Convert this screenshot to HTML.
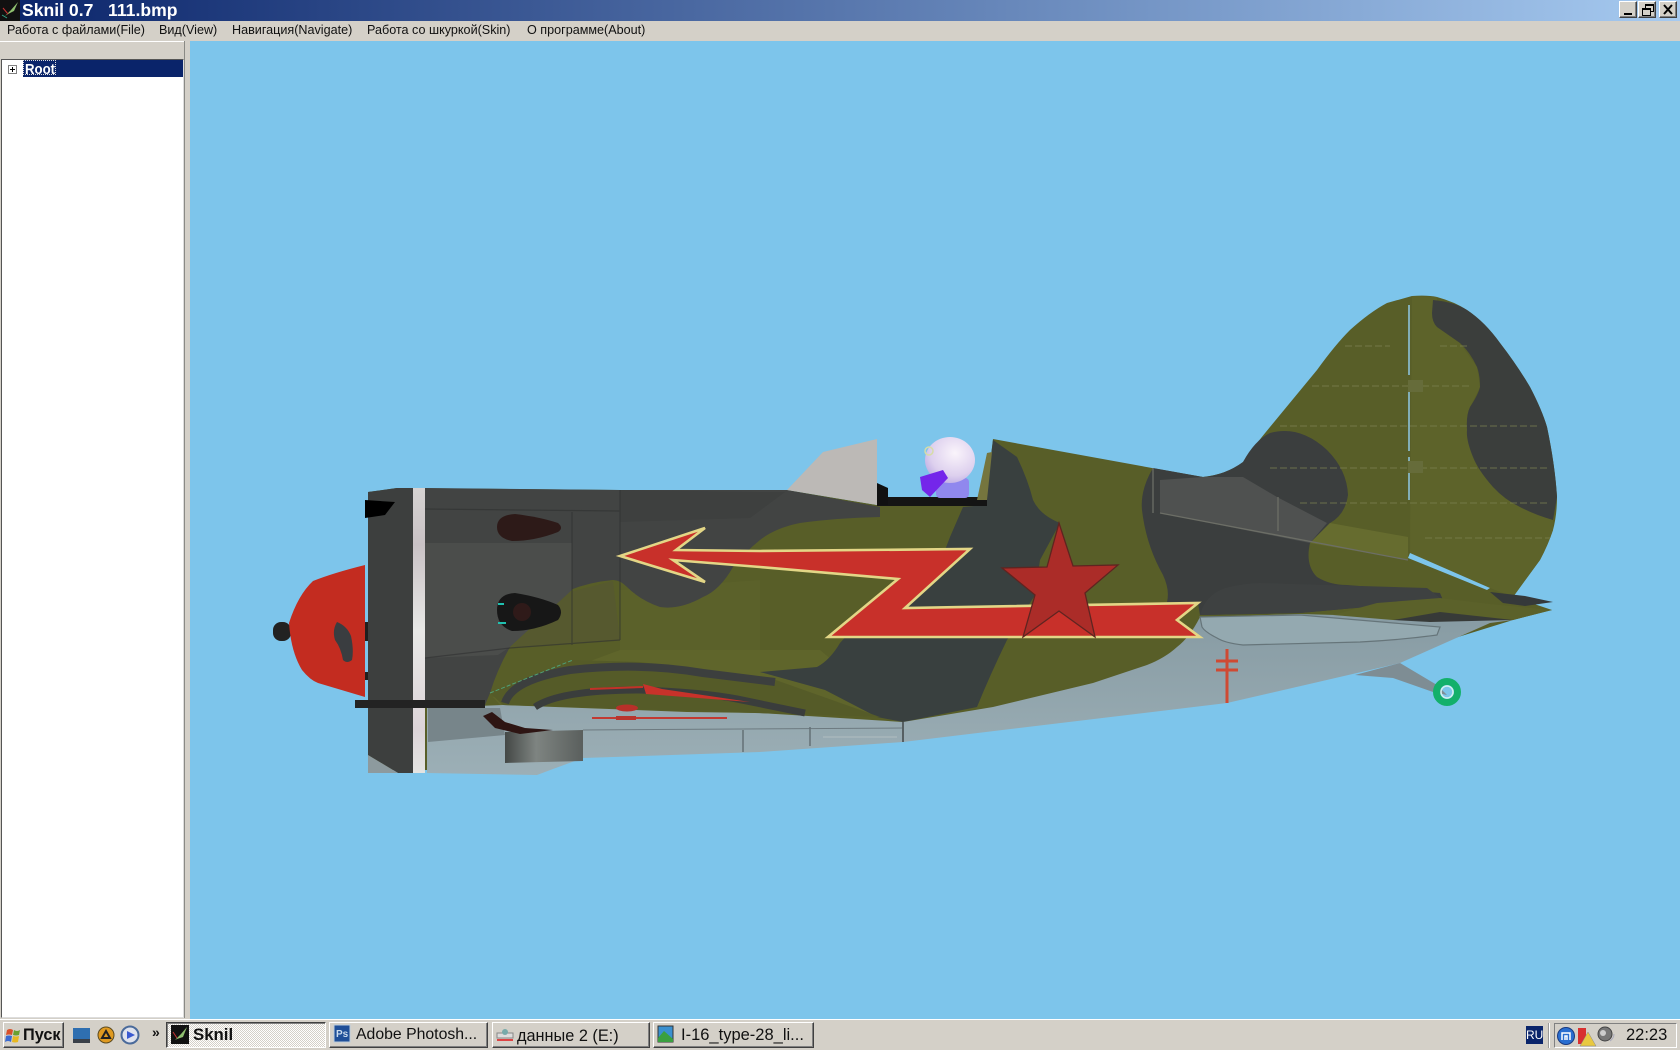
<!DOCTYPE html>
<html>
<head>
<meta charset="utf-8">
<style>
html,body{margin:0;padding:0;width:1680px;height:1050px;overflow:hidden;background:#d4d0c8;font-family:"Liberation Sans",sans-serif;}
#t{position:absolute;left:0;top:0;width:1680px;height:21px;background:linear-gradient(90deg,#0a246a,#a6caf0);}
.a{position:absolute;white-space:pre;line-height:1;}
#m{position:absolute;left:0;top:21px;width:1680px;height:20px;background:#d4d0c8;}
.mi{position:absolute;top:2px;font-size:12.6px;color:#111;white-space:pre;}
#v{position:absolute;left:190px;top:41px;width:1490px;height:978px;background:#7dc5eb;}
#ptop{position:absolute;left:0;top:41px;width:184px;height:1px;background:#fff;}
#pr{position:absolute;left:184px;top:41px;width:1px;height:977px;background:#8a8a85;}
#pane{position:absolute;left:1px;top:59px;width:181px;height:957px;background:#fff;border:1px solid #555;border-right-color:#ddd;border-bottom-color:#ddd;}
#sel{position:absolute;left:21px;top:0;width:160px;height:17px;background:#0a246a;}
#plane{position:absolute;left:0;top:0;}
#tb{position:absolute;left:0;top:1019px;width:1680px;height:31px;background:#d4d0c8;border-top:1px solid #fff;box-sizing:border-box;}
.b{position:absolute;box-sizing:border-box;background:#d4d0c8;border:1px solid;border-color:#fff #404040 #404040 #fff;box-shadow:inset -1px -1px 0 #808080;}
</style>
</head>
<body>
<div id="t">
<svg style="position:absolute;left:0;top:0" width="22" height="21"><rect width="20" height="21" fill="#111"/><path d="M5 16L11 10L18 2L14 11L8 14Z" fill="#8fc06f"/><path d="M3 8L8 14" stroke="#c33" stroke-width="1"/><path d="M2 15L7 18" stroke="#3a8" stroke-width="1"/></svg>
<div class="a" style="left:22px;top:2px;font-size:17.6px;font-weight:bold;color:#fff;">Sknil 0.7   111.bmp</div>
<div class="b" style="left:1619px;top:1px;width:18px;height:17px;"><div style="position:absolute;left:4px;top:11px;width:8px;height:2px;background:#000"></div></div>
<div class="b" style="left:1638px;top:1px;width:18px;height:17px;"><div style="position:absolute;left:6px;top:2px;width:7px;height:5px;border:1px solid #000;border-top-width:2px"></div><div style="position:absolute;left:3px;top:6px;width:7px;height:5px;border:1px solid #000;border-top-width:2px;background:#d4d0c8"></div></div>
<div class="b" style="left:1659px;top:1px;width:18px;height:17px;"><svg width="16" height="15" style="position:absolute;left:0;top:0"><path d="M4 3L12 12M12 3L4 12" stroke="#000" stroke-width="2"/></svg></div>
</div>
<div id="m">
<span class="mi" style="left:7px">Работа с файлами(File)</span>
<span class="mi" style="left:159px">Вид(View)</span>
<span class="mi" style="left:232px">Навигация(Navigate)</span>
<span class="mi" style="left:367px">Работа со шкуркой(Skin)</span>
<span class="mi" style="left:527px">О программе(About)</span>
</div>
<div id="ptop"></div><div id="pr"></div>
<div id="pane">
<div id="sel"></div>
<div style="position:absolute;left:6px;top:5px;width:7px;height:7px;border:1px solid #808080;background:#fff"></div>
<div style="position:absolute;left:8px;top:9px;width:5px;height:1px;background:#000"></div>
<div style="position:absolute;left:10px;top:7px;width:1px;height:5px;background:#000"></div>
<div class="a" style="left:21px;top:0;width:33px;height:15px;outline:1px dotted #ddd;outline-offset:-1px;"></div>
<div class="a" style="left:23px;top:2px;font-size:15px;font-weight:bold;color:#fff;transform:scaleX(.88);transform-origin:0 0;">Root</div>
</div>
<div id="v"></div>
<svg id="plane" width="1680" height="1050" viewBox="0 0 1680 1050">
<defs>
<linearGradient id="belly" x1="0" y1="0" x2="0" y2="1"><stop offset="0" stop-color="#879ba3"/><stop offset="1" stop-color="#9cafb6"/></linearGradient>
<linearGradient id="stripe" x1="0" y1="0" x2="0" y2="1"><stop offset="0" stop-color="#d6d3d2"/><stop offset=".2" stop-color="#c9c2c5"/><stop offset=".5" stop-color="#e8e8e6"/><stop offset=".85" stop-color="#dcd4d8"/><stop offset="1" stop-color="#e4e4e2"/></linearGradient>
<linearGradient id="wheel" x1="0" y1="0" x2="1" y2="0"><stop offset="0" stop-color="#444846"/><stop offset=".4" stop-color="#7e8481"/><stop offset="1" stop-color="#5a5f5d"/></linearGradient>
<radialGradient id="head" cx=".6" cy=".35" r=".7"><stop offset="0" stop-color="#faf4fb"/><stop offset=".7" stop-color="#ddd0ee"/><stop offset="1" stop-color="#bfaee4"/></radialGradient>
</defs>
<!-- propeller -->
<rect x="273" y="622" width="18" height="19" rx="8" fill="#222"/>
<rect x="364" y="622" width="6" height="19" fill="#1f1f1f"/><rect x="364" y="672" width="6" height="8" fill="#1f1f1f"/>
<path d="M365,565Q333,573 313,581Q298,595 289,623Q291,652 302,670Q310,680 318,683L365,697Z" fill="#c32c20"/>
<path d="M337,622Q347,626 351,636Q354,650 352,660Q347,664 343,660Q341,648 335,640Q332,630 337,622Z" fill="#3a3d40"/>
<!-- main silhouette olive -->
<path d="M368,492L397,488L620,490L760,492L787,490L877,505L985,505L993,439L1152,468L1203,477Q1228,474 1243,462Q1255,445 1270,427L1317,370Q1335,345 1350,330Q1370,312 1387,303L1412,296Q1428,295 1437,297Q1455,302 1467,310Q1485,322 1500,343Q1517,365 1530,387Q1542,410 1547,427Q1555,465 1557,497Q1557,515 1553,530Q1548,545 1540,560L1513,597L1552,610L1513,620L1400,655L1200,690L903,735L760,745L583,750L537,770L368,770Z" fill="#585e28"/>
<polygon points="620,590 760,580 760,650 620,660" fill="#5b612a"/>
<polygon points="493,697 620,650 820,650 880,700 877,717 500,705" fill="#5f652b"/>
<!-- fin lighter -->
<path d="M1412,296L1437,297L1437,327L1460,343L1477,367L1480,387L1470,407L1467,430L1473,457L1493,487L1520,507L1553,520L1553,530Q1548,545 1540,560L1513,597L1490,588L1410,553Z" fill="#5d632a"/>
<!-- front cowl -->
<path d="M425,488L620,490L787,490L880,507L880,517Q835,518 800,523Q775,528 760,540Q745,552 733,567Q720,590 703,597Q680,610 660,607Q640,600 627,587Q620,580 613,580Q590,582 570,590Q535,615 510,647Q497,670 490,693L485,705L425,705Z" fill="#424443"/>
<polygon points="425,543 572,543 572,590 510,647 498,655 425,658" fill="#4b4d4b"/>
<polygon points="570,592 613,581 620,640 510,648" fill="#56592f"/>
<polygon points="620,490 760,492 785,492 750,518 620,522" fill="#3e403f"/>
<path d="M425,509L620,511M425,658L510,648L620,640M572,512V645M620,490V640" stroke="#2f3130" stroke-width="1.2" fill="none" opacity=".6"/>
<polygon points="368,492 397,488 425,488 425,773 398,773 368,755" fill="#3d3f3e"/>
<polygon points="368,755 398,773 368,773" fill="#8d9a9e"/>
<!-- centre dark -->
<path d="M993,440L1017,457Q1028,480 1033,500Q1040,515 1060,523L1040,560L1035,595L1007,640Q990,675 977,707L903,722L877,717L825,690L760,672L817,667Q830,660 840,643L898,579L945,550L950,537L963,507L985,505Z" fill="#39403f"/>
<!-- rear dark -->
<path d="M1153,468L1203,477Q1225,475 1243,462Q1255,440 1270,433Q1300,425 1327,450Q1347,470 1348,495Q1345,515 1330,523L1310,543Q1305,565 1317,577Q1330,585 1347,585L1440,593L1443,600L1300,613L1200,615L1198,603L1167,602Q1170,590 1163,575Q1146,545 1142,510Q1140,490 1153,468Z" fill="#3b3e3e"/>
<polygon points="1160,480 1203,477 1243,477 1277,497 1327,523 1310,543 1160,513" fill="#4f5150"/>
<polygon points="1330,523 1408,537 1408,560 1310,543" fill="#666c2f"/>
<path d="M1153,468V513M1160,513L1408,560M1278,497V531" stroke="#6c6e66" stroke-width="1.3" fill="none"/>
<!-- rudder dark -->
<path d="M1433,300Q1455,302 1467,310Q1485,322 1500,343Q1517,365 1530,387Q1542,410 1547,427Q1555,465 1557,497L1553,520Q1535,515 1520,507Q1505,500 1493,487Q1478,470 1473,457Q1466,440 1467,430Q1466,415 1470,407Q1478,395 1480,387Q1480,375 1477,367Q1470,352 1460,343L1437,327Q1432,322 1432,313Z" fill="#3b3e3c"/>
<!-- fin ribs -->
<path d="M1345,346H1390M1440,346H1470M1312,386H1470M1280,426H1540M1270,468H1550M1300,503H1550M1425,538H1550" stroke="#7b8152" stroke-width="1.6" stroke-dasharray="7 3" opacity=".5" fill="none"/>
<path d="M1409,305V500" stroke="#8fc8e6" stroke-width="1.5" stroke-dasharray="70 6"/>
<rect x="1408" y="380" width="15" height="12" fill="#666c3a"/><rect x="1408" y="461" width="15" height="12" fill="#666c3a"/>
<polygon points="1410,553 1490,588 1487,590 1408,558" fill="#7dc5eb"/>
<!-- tail wheel -->
<polygon points="1355,675 1400,663 1437,685 1447,695 1433,692 1393,678" fill="#7e8d94"/>
<circle cx="1447" cy="692" r="10.5" fill="none" stroke="#13b06b" stroke-width="7"/>
<circle cx="1447" cy="692" r="6" fill="none" stroke="#d0f0f0" stroke-width="1.5"/>
<!-- belly -->
<path d="M1200,617Q1190,637 1177,647Q1165,658 1147,665L1093,683L993,707L903,722L760,713L687,712L503,705L427,708V773L537,775L553,769L583,758L760,752L903,742L1227,703L1357,673L1400,663L1490,623L1513,620L1300,614Z" fill="url(#belly)"/>
<polygon points="428,708 500,708 505,735 428,742" fill="#77858a"/>
<!-- fairing -->
<path d="M1200,617L1300,615L1440,627L1437,635Q1400,640 1360,642L1243,645Q1225,643 1217,638Q1205,632 1202,627Z" fill="#94a9b0" stroke="#66757a" stroke-width="1.2"/>
<path d="M1200,615Q1205,595 1225,588Q1245,583 1260,583L1427,588L1443,600L1300,613Z" fill="#3e4141"/>
<!-- tailplane -->
<polygon points="1333,615 1377,603 1440,598 1490,604 1552,610 1513,620 1393,620" fill="#5b612a"/>
<path d="M1393,620L1440,612L1513,620L1430,622Z" fill="#373a38"/>
<polygon points="1490,592 1525,596 1553,602 1525,606 1503,603" fill="#35393a"/>
<!-- wheel-well lines -->
<path d="M490,693L573,660L640,662L770,678L880,717L503,705Z" fill="#555b28"/>
<path d="M505,703Q512,680 570,670Q640,662 703,673L775,682" stroke="#3c3f3e" stroke-width="8" fill="none"/>
<path d="M535,707Q560,690 640,690Q700,692 737,699L805,713" stroke="#3a3d3c" stroke-width="7" fill="none"/>
<path d="M490,693L573,660" stroke="#4fa078" stroke-width="1" stroke-dasharray="4 2" fill="none"/>
<path d="M590,689L643,687" stroke="#c23228" stroke-width="2"/>
<polygon points="643,684 662,689 750,702 646,694" fill="#c8322a"/>
<ellipse cx="627" cy="708" rx="11" ry="3.5" fill="#b83029"/>
<path d="M592,718H727" stroke="#c23a32" stroke-width="2"/>
<rect x="616" y="716" width="20" height="4" fill="#b8352e"/>
<path d="M583,730L903,728" stroke="#6d7a80" stroke-width="1" fill="none"/>
<path d="M743,730V752M810,727V746" stroke="#647176" stroke-width="1.5" fill="none"/>
<path d="M823,737H897" stroke="#a8b8bc" stroke-width="1.5"/>
<path d="M903,722V742" stroke="#565f62" stroke-width="2"/>
<!-- wheel -->
<polygon points="505,732 583,730 583,761 505,763" fill="url(#wheel)"/>
<path d="M483,716L492,712L505,722L525,728L553,730L520,734L495,728Z" fill="#2e1513"/>
<!-- stripe white -->
<rect x="413" y="488" width="12" height="285" fill="url(#stripe)"/>
<!-- black line -->
<rect x="355" y="700" width="130" height="8" fill="#232323"/>
<!-- black nose -->
<polygon points="365,500 395,502 385,515 365,518" fill="#000"/>
<!-- exhausts -->
<path d="M497,527Q497,515 515,514Q540,517 558,523Q564,528 558,532Q535,541 512,541Q497,538 497,527Z" fill="#2d1a18"/>
<path d="M497,610Q497,594 515,593Q540,597 558,605Q564,612 558,620Q535,631 512,631Q497,626 497,610Z" fill="#171717"/>
<circle cx="522" cy="612" r="9" fill="#2f1a19"/>
<rect x="498" y="603" width="6" height="2" fill="#20c0b0"/><rect x="498" y="622" width="8" height="2" fill="#20c0b0"/>
<!-- red stripe -->
<polygon points="620,556 705,528 676,550 760,551 970,549 905,608 1198,603 1177,620 1200,637 828,637 898,579 760,567 673,560 705,582" fill="#c8302a" stroke="#e3d686" stroke-width="2.6" stroke-linejoin="miter"/>
<!-- star -->
<polygon points="1059,523 1073,566 1118,565 1085,593 1095,637 1059,611 1023,637 1035,595 1002,568 1047,567" fill="#ab2c28" stroke="#5f2420" stroke-width="1.3"/>
<!-- red cross mark -->
<path d="M1227,649V703" stroke="#cf4a33" stroke-width="3"/>
<path d="M1216,661H1238M1216,670H1238" stroke="#cf4a33" stroke-width="3"/>
<!-- canopy -->
<polygon points="787,490 823,452 877,439 877,505" fill="#bcb9b6"/>
<!-- cockpit -->
<rect x="877" y="497" width="110" height="9" fill="#141414"/>
<path d="M877,483L888,488V505H877Z" fill="#111"/>
<!-- pilot -->
<rect x="936" y="478" width="33" height="20" rx="4" fill="#9088ee"/>
<ellipse cx="950" cy="460" rx="25" ry="23" fill="url(#head)"/>
<polygon points="920,477 943,470 948,478 930,497 922,490" fill="#7426ea"/>
<circle cx="929" cy="451" r="4" fill="none" stroke="#d7dca8" stroke-width="1.5"/>
<polygon points="977,500 987,453 992,452 987,500" fill="#75753e"/>
</svg>
<div id="tb"></div>
<div class="b" style="left:3px;top:1022px;width:61px;height:26px;">
<div class="a" style="left:19px;top:4px;font-size:16.3px;font-weight:bold;color:#111;">Пуск</div>
<svg width="18" height="18" style="position:absolute;left:1px;top:4px"><path d="M2 3Q5 1 8 3L7 8Q4 7 1 8Z" fill="#d8502a"/><path d="M9 3Q12 5 15 3L14 8Q11 9 8 8Z" fill="#6aa030"/><path d="M1 9Q4 8 7 9L6 15Q3 13 0 15Z" fill="#3a6ad0"/><path d="M8 9Q11 10 14 9L13 15Q10 16 7 15Z" fill="#e8b820"/></svg>
</div>
<svg style="position:absolute;left:70px;top:1024px" width="80" height="22">
<rect x="3" y="4" width="17" height="11" fill="#2f6fb0"/><rect x="3" y="15" width="17" height="4" fill="#3a4048"/>
<circle cx="36" cy="11" r="8" fill="#e09a20" stroke="#5a4a20"/><path d="M32 14L36 7L40 14Z" stroke="#222" stroke-width="2" fill="none"/>
<circle cx="60" cy="11" r="8.5" fill="#dfe3ee" stroke="#4a6a9a" stroke-width="2"/><polygon points="57,7 65,11 57,15" fill="#3a5ad0"/>
</svg>
<div class="a" style="left:152px;top:1025px;font-size:14px;font-weight:bold;color:#111;">»</div>
<div class="b" style="left:166px;top:1022px;width:160px;height:26px;border-color:#404040 #fff #fff #404040;box-shadow:inset 1px 1px 0 #808080;background:#ece9e2 repeating-conic-gradient(#fff 0 25%,#d4d0c8 0 50%) 0 0/2px 2px;">
<svg width="20" height="20" style="position:absolute;left:4px;top:2px"><rect width="18" height="19" fill="#111"/><path d="M4 15L10 9L16 2L12 12L6 14Z" fill="#8fc06f"/><path d="M2 7L6 13" stroke="#c33"/></svg>
<div class="a" style="left:26px;top:4px;font-size:16.8px;font-weight:bold;color:#111;">Sknil</div>
</div>
<div class="b" style="left:329px;top:1022px;width:159px;height:26px;">
<svg width="20" height="20" style="position:absolute;left:3px;top:1px"><rect x="1" y="1" width="16" height="17" fill="#1f4f98" stroke="#bcd"/><text x="3" y="13" font-size="10" font-weight="bold" fill="#cde" font-family="Liberation Sans">Ps</text></svg>
<div class="a" style="left:26px;top:4px;font-size:15.8px;color:#111;">Adobe Photosh...</div>
</div>
<div class="b" style="left:492px;top:1022px;width:158px;height:26px;">
<svg width="20" height="20" style="position:absolute;left:3px;top:3px"><rect x="1" y="7" width="16" height="5" fill="#ddd" stroke="#888"/><rect x="1" y="13" width="16" height="2" fill="#d44"/><circle cx="9" cy="6" r="3" fill="#7aa"/></svg>
<div class="a" style="left:24px;top:5px;font-size:16.3px;color:#111;">данные 2 (E:)</div>
</div>
<div class="b" style="left:653px;top:1022px;width:161px;height:26px;">
<svg width="20" height="20" style="position:absolute;left:3px;top:2px"><rect x="1" y="1" width="15" height="16" fill="#3a90d0" stroke="#333"/><path d="M1 13L7 6L16 14V17H1Z" fill="#3aa040"/></svg>
<div class="a" style="left:27px;top:4px;font-size:16.5px;color:#111;">I-16_type-28_li...</div>
</div>
<div class="a" style="left:1526px;top:1026px;width:17px;height:18px;background:#0a246a;color:#fff;font-size:12px;line-height:18px;text-align:center;">RU</div>
<div style="position:absolute;left:1548px;top:1023px;width:1px;height:25px;background:#999;border-right:1px solid #fff;"></div>
<div style="position:absolute;left:1554px;top:1023px;width:123px;height:25px;box-sizing:border-box;border:1px solid;border-color:#808080 #fff #fff #808080;"></div>
<svg style="position:absolute;left:1556px;top:1024px" width="66" height="24">
<circle cx="10" cy="12" r="8.5" fill="#2a6ed0" stroke="#1a3a80"/><path d="M6 16V9H14V16M9 16V12H11V16" stroke="#fff" stroke-width="1.5" fill="none"/>
<polygon points="22,4 30,4 30,20 22,20" fill="#d83030"/><polygon points="32,8 40,22 24,22" fill="#e8c840" stroke="#888" stroke-width=".5"/>
<circle cx="49" cy="10" r="7" fill="#777" stroke="#444"/><circle cx="47" cy="9" r="3" fill="#ccc"/><path d="M54 17Q58 14 58 10" stroke="#aab" fill="none"/>
</svg>
<div class="a" style="left:1626px;top:1027px;font-size:16.5px;color:#111;">22:23</div>
</body>
</html>
